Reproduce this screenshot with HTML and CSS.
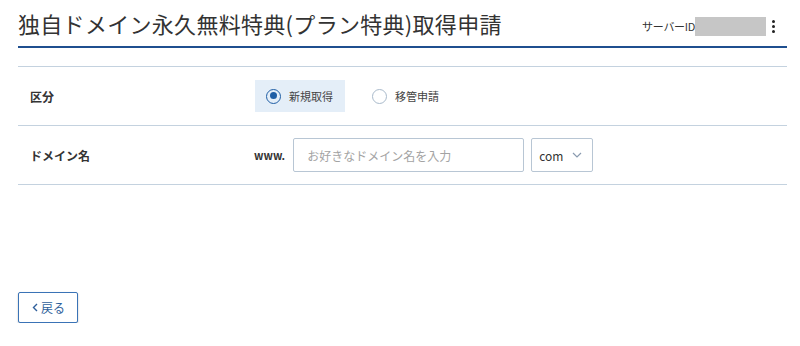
FILE: index.html
```html
<!DOCTYPE html>
<html lang="ja">
<head>
    <meta charset="UTF-8">
    <meta name="viewport" content="width=device-width, initial-scale=1.0">
    <title>独自ドメイン永久無料特典(プラン特典)取得申請</title>
    <link rel="stylesheet" href="styles.css">
</head>
<body>
    <div class="page">
        <div class="page-header">
            <h1>独自ドメイン永久無料特典(プラン特典)取得申請</h1>
            <div class="server">
                <span class="server-label">サーバーID</span>
                <span class="server-id"></span>
                <span class="menu-dots"><i></i><i></i><i></i></span>
            </div>
        </div>

        <div class="form-table">
            <div class="form-row">
                <div class="form-label">区分</div>
                <div class="form-value">
                    <label class="radio checked"><span class="radio-mark"></span>新規取得</label>
                    <label class="radio"><span class="radio-mark"></span>移管申請</label>
                </div>
            </div>
            <div class="form-row">
                <div class="form-label">ドメイン名</div>
                <div class="form-value">
                    <span class="prefix">www.</span>
                    <input class="domain-input" type="text" placeholder="お好きなドメイン名を入力">
                    <div class="select">com
                        <svg width="10" height="6" viewBox="0 0 10 6"><path d="M1 1l4 4 4-4" fill="none" stroke="#8a9bb0" stroke-width="1.2"/></svg>
                    </div>
                </div>
            </div>
        </div>

        <div class="actions">
            <button class="back-btn" type="button">
                <svg width="6" height="9" viewBox="0 0 6 9"><path d="M5 1L1.5 4.5 5 8" fill="none" stroke="#2f5f9b" stroke-width="1.4"/></svg>
                戻る
            </button>
        </div>
    </div>
</body>
</html>
```

FILE: styles.css
```css
body {
    margin: 0;
    font-family: "Noto Sans CJK JP", "Noto Sans", sans-serif;
    color: #333;
    background: #fff;
}
.page {
    padding: 0 13px 0 18px;
}
.page-header {
    display: flex;
    align-items: center;
    justify-content: space-between;
    height: 46px;
    border-bottom: 2px solid #1f4f8f;
}
.page-header h1 {
    margin: 0;
    font-size: 22px;
    font-weight: normal;
    letter-spacing: 0.3px;
    color: #333;
}
.server {
    display: flex;
    align-items: center;
    height: 20px;
    margin-top: 6px;
}
.server-label {
    font-size: 11px;
    color: #333;
    margin-right: 0;
    letter-spacing: -0.3px;
}
.server-id {
    display: block;
    width: 71px;
    height: 19px;
    background: #c6c6c6;
}
.menu-dots {
    display: flex;
    flex-direction: column;
    gap: 2px;
    margin-left: 6px;
    margin-right: 12px;
}
.menu-dots i {
    display: block;
    width: 3px;
    height: 3px;
    border-radius: 50%;
    background: #222;
}
.form-table {
    margin-top: 18px;
    border-top: 1px solid #c4d2df;
}
.form-row {
    display: flex;
    align-items: center;
    height: 58px;
    border-bottom: 1px solid #c4d2df;
}
.form-label {
    width: 225px;
    padding-left: 12px;
    font-size: 12px;
    font-weight: bold;
    color: #333;
}
.form-value {
    display: flex;
    align-items: center;
    font-size: 12px;
}
.radio {
    display: flex;
    align-items: center;
    height: 32px;
    padding: 0 12px 0 11px;
    margin-right: 16px;
    font-size: 11px;
    color: #444;
}
.radio.checked {
    background: #e4eef8;
}
.radio-mark {
    box-sizing: border-box;
    width: 15px;
    height: 15px;
    border: 1.5px solid #a9bacb;
    border-radius: 50%;
    margin-right: 8px;
    position: relative;
}
.radio.checked .radio-mark {
    border-color: #1f5ea5;
}
.radio.checked .radio-mark::after {
    content: "";
    position: absolute;
    left: 2.5px;
    top: 2.5px;
    width: 7px;
    height: 7px;
    border-radius: 50%;
    background: #1f5ea5;
}
.prefix {
    font-size: 11px;
    font-weight: bold;
    margin-left: -1px;
    margin-right: 8px;
}
.domain-input {
    box-sizing: border-box;
    width: 231px;
    height: 34px;
    padding: 0 13px;
    border: 1px solid #b8c6d4;
    border-radius: 2px;
    font-family: inherit;
    font-size: 12px;
    color: #333;
    outline: none;
}
.domain-input::placeholder {
    color: #a3a3a3;
}
.select {
    box-sizing: border-box;
    display: flex;
    align-items: center;
    justify-content: space-between;
    width: 62px;
    height: 34px;
    margin-left: 7px;
    padding: 0 10px 0 7px;
    border: 1px solid #b8c6d4;
    border-radius: 2px;
    color: #333;
}
.actions {
    padding-top: 107px;
}
.back-btn {
    box-sizing: border-box;
    display: flex;
    align-items: center;
    justify-content: center;
    gap: 3px;
    width: 60px;
    height: 31px;
    border: 1px solid #3a73b6;
    border-radius: 2px;
    background: #fff;
    box-shadow: 0 1px 2px rgba(0, 0, 0, 0.25);
    color: #2f5f9b;
    font-family: inherit;
    font-size: 12px;
    padding: 0 0 0 1px;
}
```
